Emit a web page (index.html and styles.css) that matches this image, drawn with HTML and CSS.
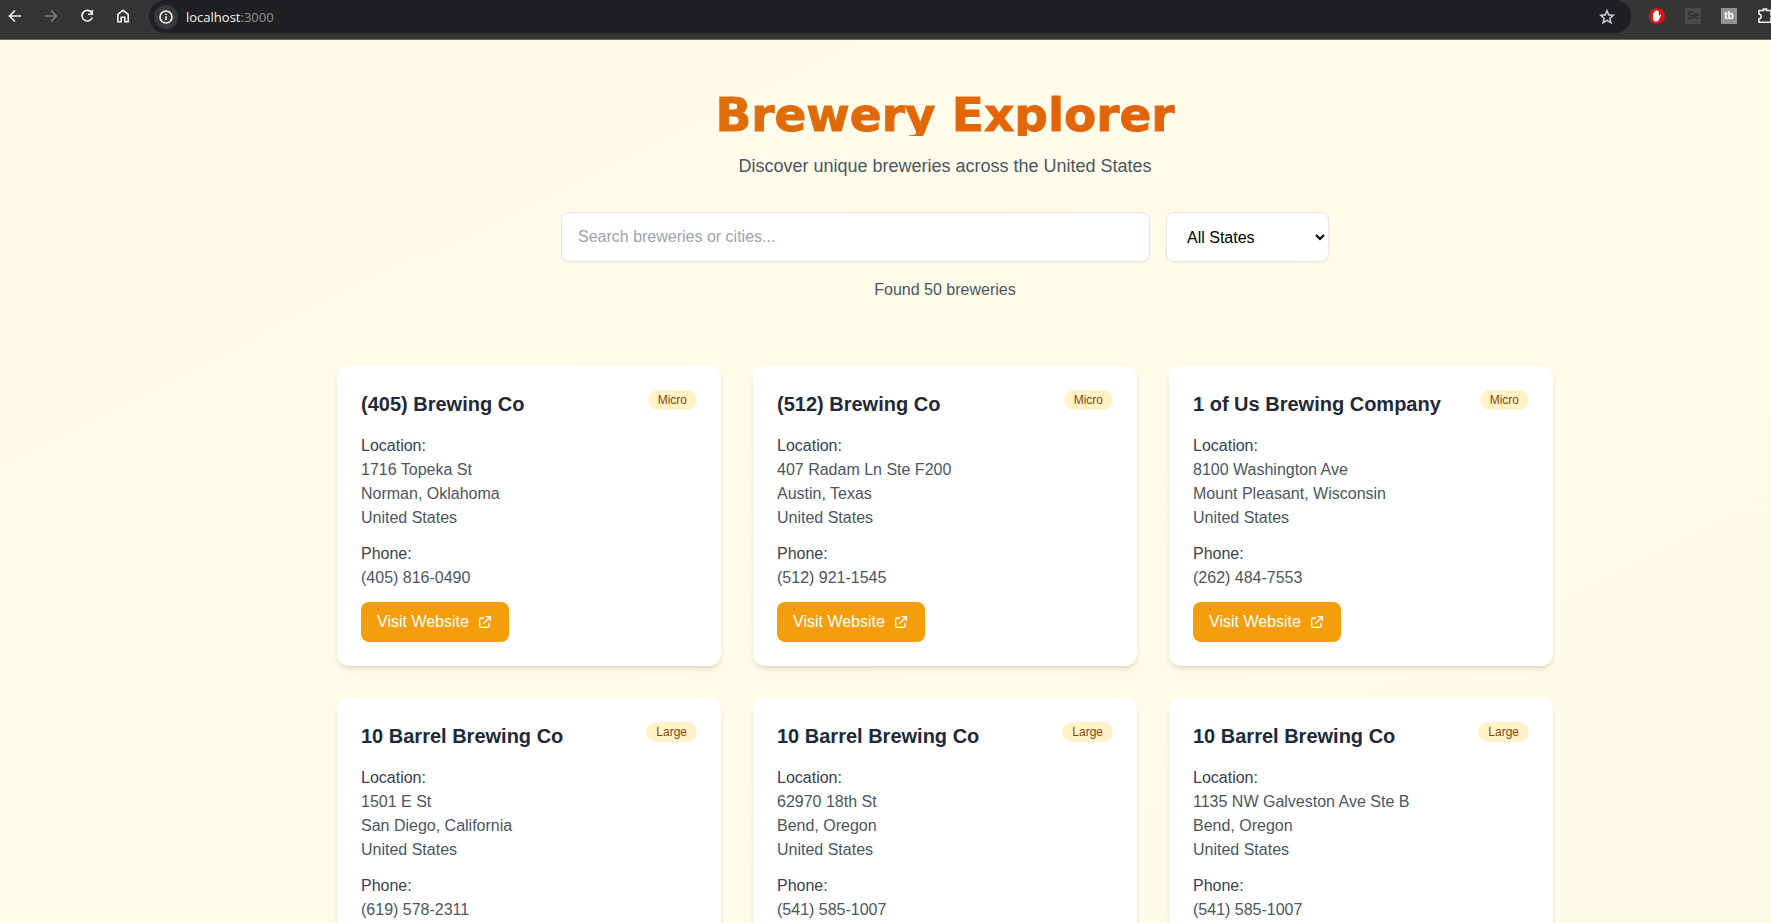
FILE: index.html
```
<!DOCTYPE html>
<html lang="en">
<head>
<meta charset="utf-8">
<title>Brewery Explorer</title>
<link rel="stylesheet" href="styles.css">
</head>
<body>
<svg class="defs" aria-hidden="true">
  <symbol id="external" viewBox="0 0 24 24"><path d="M10 6H6a2 2 0 0 0-2 2v10a2 2 0 0 0 2 2h10a2 2 0 0 0 2-2v-4M14 4h6m0 0v6m0-6L10 14" fill="none" stroke="currentColor" stroke-width="2" stroke-linecap="round" stroke-linejoin="round"/></symbol>
</svg>
<nav class="toolbar" aria-label="Browser">
  <div class="nav-buttons">
    <button class="icon-button" aria-label="Back"><svg viewBox="0 0 16 16"><path d="M14 8H3M8 2.500 2.500 8 8 13.500"/></svg></button>
    <button class="icon-button dim" aria-label="Forward"><svg viewBox="0 0 16 16"><path d="M2 8h11M8 2.500 13.500 8 8 13.500"/></svg></button>
    <button class="icon-button" aria-label="Reload"><svg viewBox="0 0 16 16"><path d="M12.800 4.800A5.300 5.300 0 1 0 13.300 9.500M13.300 2v4.200H9"/></svg></button>
    <button class="icon-button" aria-label="Home"><svg viewBox="0 0 16 16"><path d="M2.800 6.300 8 2.300l5.200 4v7.400H9.800V9.300H6.200v4.400H2.800z"/></svg></button>
  </div>
  <div class="address">
    <button class="site-info" aria-label="Site information"><svg viewBox="0 0 16 16"><circle cx="8" cy="8" r="6"/><path d="M8 7.300v3.700M8 4.700v1.300"/></svg></button>
    <span class="url"><span class="host">localhost</span>:3000</span>
    <button class="icon-button star" aria-label="Bookmark"><svg viewBox="0 0 16 16"><path d="m8 1.800 1.800 4.100 4.500.4-3.400 3 1 4.400L8 11.400l-3.900 2.300 1-4.400-3.400-3 4.500-.4z"/></svg></button>
  </div>
  <div class="extensions">
    <button class="icon-button" aria-label="Ad blocker"><svg class="filled" viewBox="0 0 16 16"><circle cx="8" cy="8" r="8" fill="#d9141c"/><path fill="#fff" d="M4 8.500V5.200q.6-.9 1.300 0V3.400q.7-.9 1.400 0V2.700q.8-.9 1.500 0v.6q.8-.9 1.500 0v4.900l1-1.400q1-.6 1.400.2l-1.900 4.300q-.9 2.300-3 2.300Q4 13.600 4 10.500z"/></svg></button>
    <button class="icon-button tile tile-dark" aria-label="Selenium">Se</button>
    <button class="icon-button tile tile-light" aria-label="TubeBuddy">tb</button>
    <button class="icon-button" aria-label="Extensions"><svg viewBox="0 0 16 16"><path d="M2 2.500h4.500V1h3v1.500H14V7h1.500v2.600H14v4.600H2v-3.400q2.200-.4 2.200-2.400T2 6z"/></svg></button>
  </div>
</nav>
<main class="page">
  <header class="hero">
    <h1 class="title">Brewery Explorer</h1>
    <p class="subtitle">Discover unique breweries across the United States</p>
    <form class="filters">
      <input class="field search" type="text" aria-label="Search breweries or cities" placeholder="Search breweries or cities...">
      <select class="field states" aria-label="State"><option>All States</option><option>California</option><option>Oklahoma</option><option>Oregon</option><option>Texas</option><option>Wisconsin</option></select>
    </form>
    <p class="count">Found 50 breweries</p>
  </header>
  <section class="grid" aria-label="Breweries">
    <article class="card">
      <div class="card-head"><h2 class="name">(405) Brewing Co</h2><span class="badge">Micro</span></div>
      <div class="detail"><p class="label">Location:</p><p>1716 Topeka St</p><p>Norman, Oklahoma</p><p>United States</p></div>
      <div class="detail"><p class="label">Phone:</p><p>(405) 816-0490</p></div>
      <a class="visit" href="#">Visit Website<svg class="external"><use href="#external"/></svg></a>
    </article>
    <article class="card">
      <div class="card-head"><h2 class="name">(512) Brewing Co</h2><span class="badge">Micro</span></div>
      <div class="detail"><p class="label">Location:</p><p>407 Radam Ln Ste F200</p><p>Austin, Texas</p><p>United States</p></div>
      <div class="detail"><p class="label">Phone:</p><p>(512) 921-1545</p></div>
      <a class="visit" href="#">Visit Website<svg class="external"><use href="#external"/></svg></a>
    </article>
    <article class="card">
      <div class="card-head"><h2 class="name">1 of Us Brewing Company</h2><span class="badge">Micro</span></div>
      <div class="detail"><p class="label">Location:</p><p>8100 Washington Ave</p><p>Mount Pleasant, Wisconsin</p><p>United States</p></div>
      <div class="detail"><p class="label">Phone:</p><p>(262) 484-7553</p></div>
      <a class="visit" href="#">Visit Website<svg class="external"><use href="#external"/></svg></a>
    </article>
    <article class="card">
      <div class="card-head"><h2 class="name">10 Barrel Brewing Co</h2><span class="badge">Large</span></div>
      <div class="detail"><p class="label">Location:</p><p>1501 E St</p><p>San Diego, California</p><p>United States</p></div>
      <div class="detail"><p class="label">Phone:</p><p>(619) 578-2311</p></div>
      <a class="visit" href="#">Visit Website<svg class="external"><use href="#external"/></svg></a>
    </article>
    <article class="card">
      <div class="card-head"><h2 class="name">10 Barrel Brewing Co</h2><span class="badge">Large</span></div>
      <div class="detail"><p class="label">Location:</p><p>62970 18th St</p><p>Bend, Oregon</p><p>United States</p></div>
      <div class="detail"><p class="label">Phone:</p><p>(541) 585-1007</p></div>
      <a class="visit" href="#">Visit Website<svg class="external"><use href="#external"/></svg></a>
    </article>
    <article class="card">
      <div class="card-head"><h2 class="name">10 Barrel Brewing Co</h2><span class="badge">Large</span></div>
      <div class="detail"><p class="label">Location:</p><p>1135 NW Galveston Ave Ste B</p><p>Bend, Oregon</p><p>United States</p></div>
      <div class="detail"><p class="label">Phone:</p><p>(541) 585-1007</p></div>
      <a class="visit" href="#">Visit Website<svg class="external"><use href="#external"/></svg></a>
    </article>
  </section>
</main>
</body>
</html>
```
FILE: styles.css
```
* { box-sizing: border-box; }
html { height: 100%; }
body {
  display: flex;
  flex-direction: column;
  height: 100%;
  margin: 0;
  overflow: hidden;
  font: 16px/24px "Liberation Sans", Arial, sans-serif;
  color: #4b5563;
}
h1, h2, p { margin: 0; }
button { padding: 0; border: 0; background: none; color: inherit; font: inherit; }
.defs { display: none; }

/* Browser toolbar */
.toolbar {
  display: flex;
  flex: none;
  align-items: flex-start;
  height: 40px;
  border-bottom: 1px solid #6b6b68;
  background: #353535;
  color: #f1f1f1;
}
.nav-buttons { display: flex; gap: 20px; padding: 8px 18px 0 7px; }
.icon-button { display: flex; flex: none; width: 16px; height: 16px; }
.dim { color: #7d7d7d; }
.toolbar svg {
  width: 16px;
  height: 16px;
  fill: none;
  stroke: currentColor;
  stroke-width: 1.6;
}
.toolbar .filled { stroke: none; }
.address {
  display: flex;
  flex: 1;
  align-items: center;
  height: 33px;
  padding: 0 16px 0 5px;
  border-radius: 16px;
  background: #1f2023;
}
.site-info {
  display: grid;
  place-items: center;
  width: 24px;
  height: 24px;
  border-radius: 50%;
  background: #38393b;
}
.url { flex: 1; padding-left: 8px; font: 13px/20px "Open Sans", "Noto Sans", sans-serif; color: #8e9093; }
.host { color: #f4f4f4; }
.star { color: #c9cacc; }
.extensions { display: flex; gap: 20px; margin-right: -2px; padding: 8px 0 0 18px; }
.tile { display: block; font: 700 10px/16px "Liberation Sans", Arial, sans-serif; text-align: center; }
.tile-dark { background: #4a4a4a; color: #303030; }
.tile-light { background: #929292; color: #fff; }

/* Page */
.page {
  flex: 1;
  min-height: 0;
  padding: 48px 0 48px 119px;
  overflow-y: auto;
  scrollbar-width: none;
  background: linear-gradient(to bottom right, #fffbeb, #fefce8);
}
.hero {
  display: flex;
  flex-direction: column;
  align-items: center;
  gap: 16px;
  max-width: 1216px;
  margin: 0 auto 64px;
}
.title {
  width: 100%;
  height: 48px;
  background: linear-gradient(to right, #d97706, #ea580c);
  background-clip: text;
  -webkit-background-clip: text;
  -webkit-text-stroke: 1px transparent;
  color: transparent;
  font: 900 47px/54px "Arial Black", "DejaVu Sans", sans-serif;
  text-align: center;
}
.subtitle { font-size: 18px; line-height: 28px; }
.filters {
  display: flex;
  gap: 16px;
  width: 100%;
  max-width: 768px;
  margin-top: 16px;
}
.field {
  height: 50px;
  border: 1px solid #e5e7eb;
  border-radius: 8px;
  background: #fff;
  box-shadow: 0 1px 2px rgb(0 0 0 / 5%);
  color: #000;
  font: 16px/24px "Liberation Sans", Arial, sans-serif;
}
.search { flex: 1; min-width: 0; padding: 0 16px; }
.search::placeholder { color: #9ca3af; }
.states { width: 163px; padding: 0 0 0 16px; }
.grid {
  display: grid;
  grid-template-columns: repeat(3, minmax(0, 1fr));
  gap: 32px;
  max-width: 1216px;
  margin: 0 auto;
}
.card {
  padding: 24px;
  border-radius: 12px;
  background: #fff;
  box-shadow: 0 4px 6px -1px rgb(0 0 0 / 10%), 0 2px 4px -2px rgb(0 0 0 / 10%);
}
.card-head { display: flex; align-items: flex-start; justify-content: space-between; margin-bottom: 16px; }
.name { color: #1f2937; font-size: 20px; line-height: 28px; }
.badge {
  padding: 2px 10px;
  border-radius: 10px;
  background: #fef3c7;
  color: #92400e;
  font-size: 12px;
  line-height: 16px;
}
.detail { margin-bottom: 12px; }
.label { color: #374151; }
.visit {
  display: inline-flex;
  align-items: center;
  gap: 8px;
  padding: 8px 16px;
  border-radius: 8px;
  background: #f59e0b;
  color: #fff;
  text-decoration: none;
}
.external { width: 16px; height: 16px; }
```
